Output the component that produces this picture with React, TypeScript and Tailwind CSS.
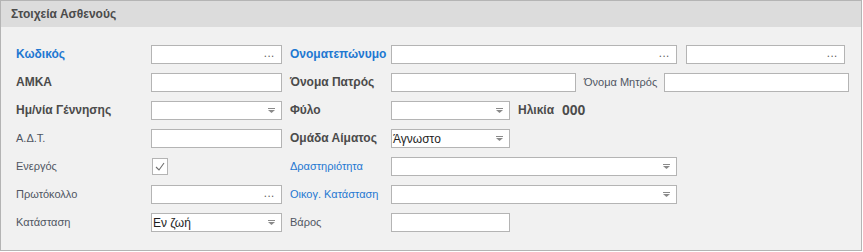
import React from "react";

type Kind = "text" | "dots" | "combo";

const labelTone = {
    blueBold: "font-bold text-[#1f78d1] font-['Liberation_Sans',sans-serif] text-[12px]",
    bold: "font-bold text-[#4b4b4b] font-['Liberation_Sans',sans-serif] text-[12px]",
    blue: "text-[#1f78d1] font-['Liberation_Sans',sans-serif] text-[11px]",
    plain: "text-[#4f5562] font-['Liberation_Sans',sans-serif] text-[11px]",
};

function Label({ text, tone, w }: { text: string; tone: keyof typeof labelTone; w: string }) {
    return <div className={`${w} shrink-0 leading-[19px] whitespace-nowrap ${labelTone[tone]}`}>{text}</div>;
}

function ComboArrow() {
    return (
        <svg width="7" height="5" viewBox="0 0 7 5" className="shrink-0">
            <rect x="0" y="0" width="7" height="1" fill="#8a8a8a" />
            <polygon points="0,2 7,2 3.5,5" fill="#8a8a8a" />
        </svg>
    );
}

function Field({ w, kind = "text", value }: { w: string; kind?: Kind; value?: string }) {
    return (
        <div className={`${w} h-[19px] shrink-0 bg-white border border-[#b4b4b4] flex items-center pr-[6px] pl-px`}>
            <span className="flex-1 text-[12px] text-[#1e1e1e] font-['Liberation_Sans',sans-serif] leading-none whitespace-nowrap">
                {value}
            </span>
            {kind === "dots" && <span className="text-[10px] text-[#555] tracking-[1px] leading-none -mt-1">...</span>}
            {kind === "combo" && <ComboArrow />}
        </div>
    );
}

function CheckBox() {
    return (
        <div className="ml-px w-[16px] h-[17px] bg-white border border-[#b4b4b4] flex items-center justify-center">
            <svg width="10" height="9" viewBox="0 0 10 9">
                <path d="M1 5 L4 8 L9 1" fill="none" stroke="#6e6e6e" strokeWidth="1.1" />
            </svg>
        </div>
    );
}

export default function App(): React.JSX.Element {
    return (
        <div className="w-[862px] h-[251px] border border-[#b4b4b4] bg-[#f1f1f1] flex flex-col">
            {/* Header */}
            <div className="h-[26px] bg-[#dcdcdc] flex items-center pl-[10px] font-['Liberation_Sans',sans-serif] font-bold text-[12px] text-[#4b4b4b]">
                Στοιχεία Ασθενούς
            </div>

            {/* Form rows */}
            <div className="pt-[18px] pl-[15px] flex flex-col gap-[9px]">
                <div className="flex items-center">
                    <Label text="Κωδικός" tone="blueBold" w="w-[135px]" />
                    <Field w="w-[131px]" kind="dots" />
                    <div className="w-[8px]" />
                    <Label text="Ονοματεπώνυμο" tone="blueBold" w="w-[101px]" />
                    <Field w="w-[286px]" kind="dots" />
                    <div className="w-[9px]" />
                    <Field w="w-[159px]" kind="dots" />
                </div>

                <div className="flex items-center">
                    <Label text="ΑΜΚΑ" tone="bold" w="w-[135px]" />
                    <Field w="w-[131px]" />
                    <div className="w-[8px]" />
                    <Label text="Όνομα Πατρός" tone="bold" w="w-[101px]" />
                    <Field w="w-[185px]" />
                    <div className="w-[8px]" />
                    <Label text="Όνομα Μητρός" tone="plain" w="w-[80px]" />
                    <Field w="w-[185px]" />
                </div>

                <div className="flex items-center">
                    <Label text="Ημ/νία Γέννησης" tone="bold" w="w-[135px]" />
                    <Field w="w-[131px]" kind="combo" />
                    <div className="w-[8px]" />
                    <Label text="Φύλο" tone="bold" w="w-[101px]" />
                    <Field w="w-[119px]" kind="combo" />
                    <div className="w-[8px]" />
                    <Label text="Ηλικία" tone="bold" w="w-[44px]" />
                    <span className="font-['Liberation_Sans',sans-serif] font-bold text-[14px] text-[#4b4b4b] leading-[19px]">000</span>
                </div>

                <div className="flex items-center">
                    <Label text="Α.Δ.Τ." tone="plain" w="w-[135px]" />
                    <Field w="w-[131px]" />
                    <div className="w-[8px]" />
                    <Label text="Ομάδα Αίματος" tone="bold" w="w-[101px]" />
                    <Field w="w-[119px]" kind="combo" value="Άγνωστο" />
                </div>

                <div className="flex items-center">
                    <Label text="Ενεργός" tone="plain" w="w-[135px]" />
                    <div className="w-[131px] shrink-0 flex items-center">
                        <CheckBox />
                    </div>
                    <div className="w-[8px]" />
                    <Label text="Δραστηριότητα" tone="blue" w="w-[101px]" />
                    <Field w="w-[286px]" kind="combo" />
                </div>

                <div className="flex items-center">
                    <Label text="Πρωτόκολλο" tone="plain" w="w-[135px]" />
                    <Field w="w-[131px]" kind="dots" />
                    <div className="w-[8px]" />
                    <Label text="Οικογ. Κατάσταση" tone="blue" w="w-[101px]" />
                    <Field w="w-[286px]" kind="combo" />
                </div>

                <div className="flex items-center">
                    <Label text="Κατάσταση" tone="plain" w="w-[135px]" />
                    <Field w="w-[131px]" kind="combo" value="Εν ζωή" />
                    <div className="w-[8px]" />
                    <Label text="Βάρος" tone="plain" w="w-[101px]" />
                    <Field w="w-[119px]" />
                </div>
            </div>
        </div>
    );
}
